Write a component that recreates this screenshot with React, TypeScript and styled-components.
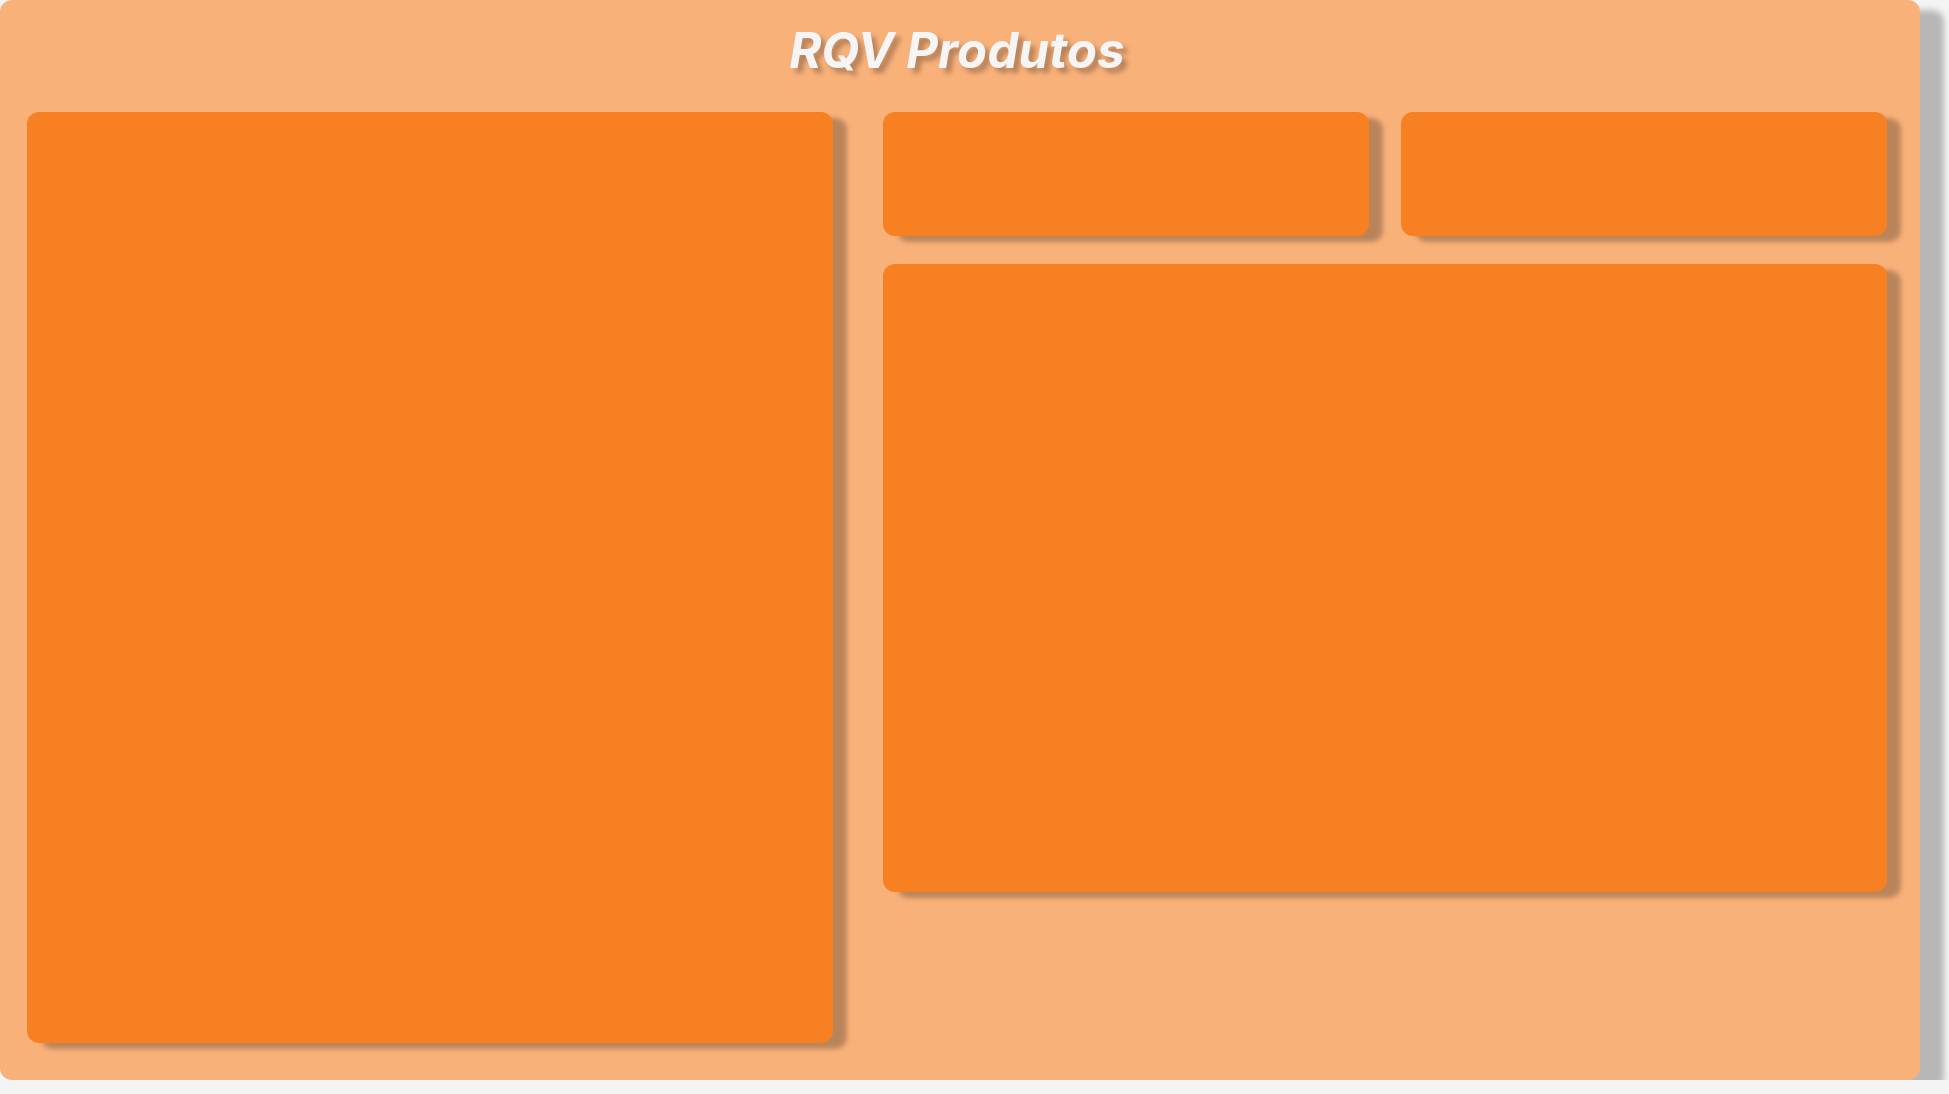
import React from 'react';
import styled, { createGlobalStyle } from 'styled-components';

const GlobalStyle = createGlobalStyle`
  html, body {
    margin: 0;
    padding: 0;
    background: #f4f4f4;
  }

  body {
    font-family: Inter, "Noto Sans", sans-serif;
  }
`;

const Board = styled.main`
  width: 1920px;
  height: 1080px;
  box-sizing: border-box;
  background: #f9b17a;
  border-radius: 12px;
  box-shadow: 24px 10px 6px rgba(0, 0, 0, 0.25);
  padding: 0 33px 37px 27px;
  display: flex;
  flex-direction: column;
`;

const Title = styled.h1`
  margin: 0;
  height: 112px;
  display: flex;
  align-items: center;
  justify-content: center;
  padding-bottom: 12px;
  box-sizing: border-box;
  font-size: 49px;
  font-weight: 700;
  font-style: italic;
  letter-spacing: 0.2px;
  color: #f5f5f5;
  text-shadow: 5px 5px 5px rgba(0, 0, 0, 0.28);
`;

const Content = styled.section`
  flex: 1;
  display: grid;
  grid-template-columns: 806px 1fr;
  column-gap: 50px;
  min-height: 0;
`;

const Side = styled.div`
  display: flex;
  flex-direction: column;
  gap: 28px;
  padding-bottom: 151px;
`;

const Row = styled.div`
  display: grid;
  grid-template-columns: 1fr 1fr;
  column-gap: 32px;
`;

const Card = styled.div<{ height?: number }>`
  background: #f78022;
  border-radius: 12px;
  box-shadow: 14px 6px 5px rgba(0, 0, 0, 0.25);
  height: ${props => (props.height ? `${props.height}px` : 'auto')};
  flex: ${props => (props.height ? '0 0 auto' : '1')};
`;

const App: React.FC = () => {
  return (
    <>
      <GlobalStyle />
      <Board>
        <Title>RQV Produtos</Title>
        <Content>
          <Card />
          <Side>
            <Row>
              <Card height={124} />
              <Card height={124} />
            </Row>
            <Card />
          </Side>
        </Content>
      </Board>
    </>
  );
};

export default App;
